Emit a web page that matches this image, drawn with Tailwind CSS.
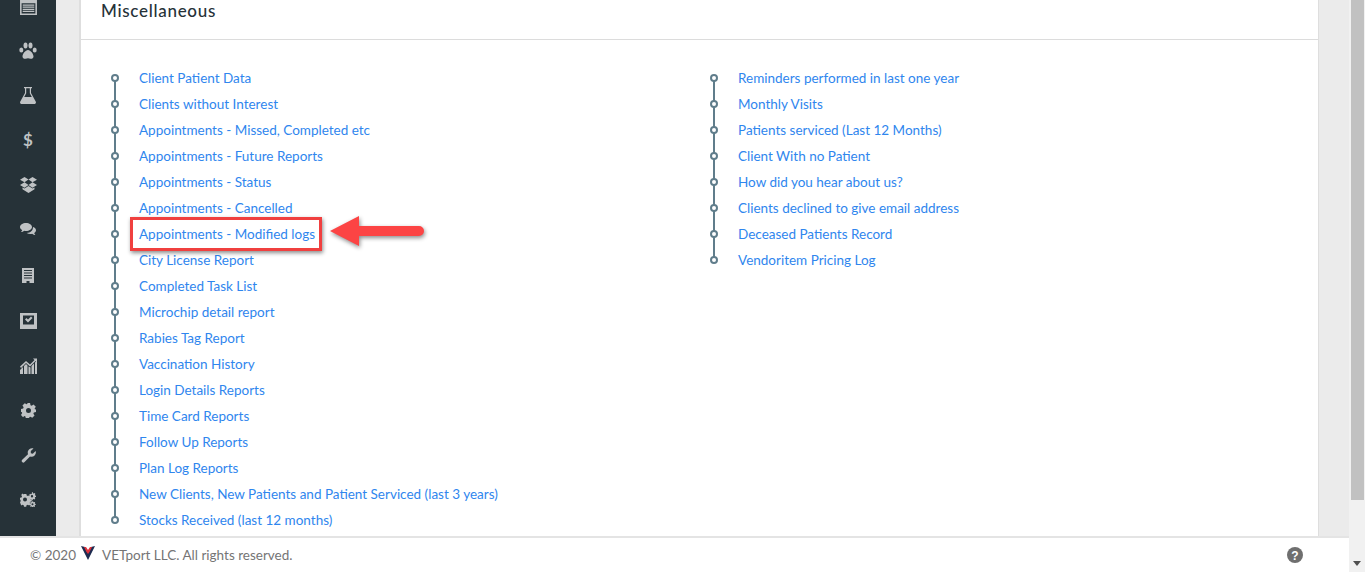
<!DOCTYPE html>
<html lang="en">
<head>
    <meta charset="UTF-8">
    <title>Reports - Miscellaneous</title>
    <script src="https://cdn.jsdelivr.net/npm/@tailwindcss/browser@4"></script>
</head>
<body class="h-[572px] overflow-hidden bg-white font-['Lato',sans-serif] flex">
    <div class="flex-1 min-w-0 flex flex-col">
        <div class="h-[536px] flex overflow-hidden bg-[#ebebeb]">
            <!-- sidebar -->
            <aside class="w-[56px] h-[560px] shrink-0 bg-[#263238] flex flex-col items-center text-[#bfc2c4] -mt-[17px]">
                <div class="h-[45px] flex items-center justify-center shrink-0">
                    <svg class="w-[17px] h-[18px]" viewBox="0 0 16 17" fill="currentColor"><path fill-rule="evenodd" d="M0 2h3V0h2v2h6V0h2v2h3v15H0zM1.500 6v9.500h13V6z"/><path d="M2.500 7h11v1.200h-11zM2.500 9h11v1.200h-11zM2.500 11h11v1.200h-11zM2.500 13h11v1.200h-11z"/></svg>
                </div>
                <div class="h-[45px] flex items-center justify-center shrink-0">
                    <svg class="w-[18px] h-[17px]" viewBox="0 0 18 17" fill="currentColor"><ellipse cx="6.500" cy="3.500" rx="2" ry="3"/><ellipse cx="11.500" cy="3.500" rx="2" ry="3"/><ellipse cx="2.300" cy="8" rx="2" ry="2.600"/><ellipse cx="15.700" cy="8" rx="2" ry="2.600"/><path d="M9 8c2.500 0 5.500 4 5.500 6.500 0 2-2 2.500-3 2.200-1-.3-1.700-.5-2.500-.5s-1.500.2-2.500.5c-1 .3-3-.2-3-2.200C3.500 12 6.500 8 9 8z"/></svg>
                </div>
                <div class="h-[44px] flex items-center justify-center shrink-0">
                    <svg class="w-[16px] h-[17px]" viewBox="0 0 16 17" fill="currentColor"><path fill-rule="evenodd" d="M4 0h8v1.200h-1V6l4.700 8.500c.7 1.200-.1 2.500-1.400 2.500H1.700C.4 17-.4 15.700.3 14.500L5 6V1.200H4zM6.200 1.200v5.100L4.200 10h7.600L9.800 6.300V1.200z"/></svg>
                </div>
                <div class="h-[45px] flex items-center justify-center shrink-0 text-[17px] font-bold">$</div>
                <div class="h-[45px] flex items-center justify-center shrink-0">
                    <svg class="w-[17px] h-[16px]" viewBox="0 0 17 16" fill="currentColor"><path d="M4.500 0l4 2.600L4.500 5.300 0 2.700zM12.500 0L17 2.700l-4.500 2.600-4-2.700zM0 8l4.500-2.700 4 2.700-4 2.700zM12.500 5.300L17 8l-4.500 2.700-4-2.700zM4.500 11.500l4-2.500 4 2.500 2-1.100v1.900L8.500 16l-6-3.700v-1.900z"/></svg>
                </div>
                <div class="h-[45px] flex items-center justify-center shrink-0">
                    <svg class="w-[16px] h-[13px]" viewBox="0 0 16 13" fill="currentColor"><path d="M6 0c3.300 0 6 1.700 6 4s-2.700 4-6 4c-.6 0-1.200-.1-1.700-.2C3.300 8.700 2 9 1 9c.7-.6 1.100-1.300 1.200-2C.9 6.300 0 5.200 0 4c0-2.300 2.700-4 6-4z"/><path d="M13 4c1.800.5 3 1.800 3 3.200 0 1.100-.7 2.100-1.800 2.800.1.700.5 1.400 1.200 2-1 0-2.300-.3-3.300-1.200-.5.100-1 .2-1.600.2-1.500 0-2.800-.4-3.800-1.100C10.500 9.800 13 7.500 13 4z"/></svg>
                </div>
                <div class="h-[45px] mt-[1px] flex items-center justify-center shrink-0">
                    <svg class="w-[12px] h-[15px]" viewBox="0 0 12 15" fill="currentColor"><path fill-rule="evenodd" d="M0 0h12v15H7.500v-2h-3v2H0zM2 2v1h8V2zM2 4.500v1h8v-1zM2 7v1h8V7zM2 9.500v1h8v-1z"/></svg>
                </div>
                <div class="h-[45px] flex items-center justify-center shrink-0">
                    <svg class="w-[17px] h-[16px]" viewBox="0 0 17 16" fill="currentColor"><path fill-rule="evenodd" d="M0 0h17v16H0zM3 2.500v9h11v-9z"/><path d="M5 6.500l1.500-1.500 1.500 1.500 3-3L12.500 5 8 9.500z"/></svg>
                </div>
                <div class="h-[45px] flex items-center justify-center shrink-0">
                    <svg class="w-[17px] h-[16px]" viewBox="0 0 17 16" fill="currentColor"><path d="M0 16v-4l3-3v7zM4 16V8l2-2 1.500 1.500V16zM8.500 16V8.500l2 1V16zM11.500 16V8l2.500-2.500V16zM15 16V4.500l2-2V16z"/><path d="M0 8.500L6 3l4 3.500L14.500 2 13 .5h4v4L15.500 3 10 8.500 6 5 1 10z"/></svg>
                </div>
                <div class="h-[45px] flex items-center justify-center shrink-0">
                    <svg class="w-[15px] h-[15px]" viewBox="0 0 24 24" fill="currentColor"><path fill-rule="evenodd" d="M9.500 0h5l.7 3.400 1.900.8L20 2.300 23.700 6l-1.900 2.900.8 1.900L24 9.500v5l-3.400.7-.8 1.900 1.900 2.900-3.700 3.700-2.900-1.900-1.600.7-.7 2.500h-5l-.7-3.400-1.900-.8L3.300 22.700 0 19l1.900-2.900-.8-1.900L0 14.500v-5l3.400-.7.8-1.900L2.300 3.900 6 .2l2.900 1.900 1.900-.8zM12 8a4 4 0 100 8 4 4 0 000-8z"/></svg>
                </div>
                <div class="h-[44px] flex items-center justify-center shrink-0">
                    <svg class="w-[15px] h-[15px]" viewBox="0 0 15 15" fill="currentColor"><path d="M1.200 11.700L7 6.200C6.300 4 7 2.300 8.300 1.200 9.500.2 11 0 12.500.4L9.800 3v2.200l2 .5L14.600 3c.6 1.700.2 3.300-1 4.500-1.200 1.100-2.900 1.500-4.600 1L3.300 14.300c-.5.500-1.300.5-1.900 0l-.4-.5c-.5-.6-.4-1.500.2-2.100z"/></svg>
                </div>
                <div class="h-[45px] flex items-center justify-center shrink-0">
                    <svg class="w-[16px] h-[15px]" viewBox="0 0 16 15" fill="currentColor"><path fill-rule="evenodd" d="M4 3.500h2.400l.3 1.500 1.300.6 1.300-.8 1.300 1.400-.8 1.300.4 1.300 1.500.3v1.800l-1.500.3-.5 1.300.8 1.300-1.400 1.200-1.300-.8-1.300.5-.3 1.500H4l-.3-1.500-1.300-.5-1.200.8L0 11.800l.8-1.300L.3 9.200 0 9V7.300l1.500-.3.500-1.300L1.200 4.400l1.300-1.300 1.200.8zM5 7a2 2 0 100 4 2 2 0 000-4z" transform="translate(0 -1.500)"/><path fill-rule="evenodd" d="M12 0l.8.2.2 1 .8.3.9-.4.7.9-.5.8.3.8 1 .3v1l-1 .2-.4.8.5.9-.8.7-.8-.5-.8.3-.3 1h-1l-.2-1-.8-.3-.9.5-.4-.5V6.800l.3-.3-.2-.7-.6-.3-.2-1.200.8-.2.4-.8-.5-.9.8-.7.8.5.8-.3zM12 3a1.200 1.200 0 100 2.400A1.200 1.200 0 0012 3z"/><path fill-rule="evenodd" d="M12.500 9l.6.2.2.8.6.2.7-.3.6.7-.4.6.2.6.8.2v.8l-.8.2-.3.6.4.7-.6.6-.7-.4-.6.2-.2.8h-.8l-.2-.8-.6-.2-.7.4-.5-.6.3-.7-.2-.6-.8-.2v-.8l.8-.2.3-.6-.4-.7.6-.5.7.3.6-.2zM12.500 11.300a1 1 0 100 2 1 1 0 000-2z"/></svg>
                </div>
            </aside>

            <!-- content -->
            <main class="flex-1 min-w-0 pl-[23px] pr-[30px]">
                <div class="relative h-[560px] bg-white border-l-2 border-r border-[#dedede]">
                    <div class="h-[40px] border-b border-[#dcdcdc] pl-[20px] text-[17px] leading-[22px] font-medium tracking-[0.7px] text-[#263238]">Miscellaneous</div>
                    <div class="flex pt-[25px] text-[13.5px] leading-[26px] text-[#2f86ee]">
                        <ul class="w-[599px] ml-[30px] relative before:absolute before:left-[3px] before:top-[11px] before:h-[442px] before:w-[2px] before:bg-[#607d8b]">
                            <li class="h-[26px] flex"><span class="relative mt-[9px] w-[8px] h-[8px] rounded-full border-2 border-[#607d8b] bg-white shrink-0"></span><a class="ml-[20px]">Client Patient Data</a></li>
                            <li class="h-[26px] flex"><span class="relative mt-[9px] w-[8px] h-[8px] rounded-full border-2 border-[#607d8b] bg-white shrink-0"></span><a class="ml-[20px]">Clients without Interest</a></li>
                            <li class="h-[26px] flex"><span class="relative mt-[9px] w-[8px] h-[8px] rounded-full border-2 border-[#607d8b] bg-white shrink-0"></span><a class="ml-[20px]">Appointments - Missed, Completed etc</a></li>
                            <li class="h-[26px] flex"><span class="relative mt-[9px] w-[8px] h-[8px] rounded-full border-2 border-[#607d8b] bg-white shrink-0"></span><a class="ml-[20px]">Appointments - Future Reports</a></li>
                            <li class="h-[26px] flex"><span class="relative mt-[9px] w-[8px] h-[8px] rounded-full border-2 border-[#607d8b] bg-white shrink-0"></span><a class="ml-[20px]">Appointments - Status</a></li>
                            <li class="h-[26px] flex"><span class="relative mt-[9px] w-[8px] h-[8px] rounded-full border-2 border-[#607d8b] bg-white shrink-0"></span><a class="ml-[20px]">Appointments - Cancelled</a></li>
                            <li class="h-[26px] flex"><span class="relative mt-[9px] w-[8px] h-[8px] rounded-full border-2 border-[#607d8b] bg-white shrink-0"></span><a class="ml-[20px]">Appointments - Modified logs</a></li>
                            <li class="h-[26px] flex"><span class="relative mt-[9px] w-[8px] h-[8px] rounded-full border-2 border-[#607d8b] bg-white shrink-0"></span><a class="ml-[20px]">City License Report</a></li>
                            <li class="h-[26px] flex"><span class="relative mt-[9px] w-[8px] h-[8px] rounded-full border-2 border-[#607d8b] bg-white shrink-0"></span><a class="ml-[20px]">Completed Task List</a></li>
                            <li class="h-[26px] flex"><span class="relative mt-[9px] w-[8px] h-[8px] rounded-full border-2 border-[#607d8b] bg-white shrink-0"></span><a class="ml-[20px]">Microchip detail report</a></li>
                            <li class="h-[26px] flex"><span class="relative mt-[9px] w-[8px] h-[8px] rounded-full border-2 border-[#607d8b] bg-white shrink-0"></span><a class="ml-[20px]">Rabies Tag Report</a></li>
                            <li class="h-[26px] flex"><span class="relative mt-[9px] w-[8px] h-[8px] rounded-full border-2 border-[#607d8b] bg-white shrink-0"></span><a class="ml-[20px]">Vaccination History</a></li>
                            <li class="h-[26px] flex"><span class="relative mt-[9px] w-[8px] h-[8px] rounded-full border-2 border-[#607d8b] bg-white shrink-0"></span><a class="ml-[20px]">Login Details Reports</a></li>
                            <li class="h-[26px] flex"><span class="relative mt-[9px] w-[8px] h-[8px] rounded-full border-2 border-[#607d8b] bg-white shrink-0"></span><a class="ml-[20px]">Time Card Reports</a></li>
                            <li class="h-[26px] flex"><span class="relative mt-[9px] w-[8px] h-[8px] rounded-full border-2 border-[#607d8b] bg-white shrink-0"></span><a class="ml-[20px]">Follow Up Reports</a></li>
                            <li class="h-[26px] flex"><span class="relative mt-[9px] w-[8px] h-[8px] rounded-full border-2 border-[#607d8b] bg-white shrink-0"></span><a class="ml-[20px]">Plan Log Reports</a></li>
                            <li class="h-[26px] flex"><span class="relative mt-[9px] w-[8px] h-[8px] rounded-full border-2 border-[#607d8b] bg-white shrink-0"></span><a class="ml-[20px]">New Clients, New Patients and Patient Serviced (last 3 years)</a></li>
                            <li class="h-[26px] flex"><span class="relative mt-[9px] w-[8px] h-[8px] rounded-full border-2 border-[#607d8b] bg-white shrink-0"></span><a class="ml-[20px]">Stocks Received (last 12 months)</a></li>
                        </ul>
                        <ul class="relative before:absolute before:left-[3px] before:top-[11px] before:h-[182px] before:w-[2px] before:bg-[#607d8b]">
                            <li class="h-[26px] flex"><span class="relative mt-[9px] w-[8px] h-[8px] rounded-full border-2 border-[#607d8b] bg-white shrink-0"></span><a class="ml-[20px]">Reminders performed in last one year</a></li>
                            <li class="h-[26px] flex"><span class="relative mt-[9px] w-[8px] h-[8px] rounded-full border-2 border-[#607d8b] bg-white shrink-0"></span><a class="ml-[20px]">Monthly Visits</a></li>
                            <li class="h-[26px] flex"><span class="relative mt-[9px] w-[8px] h-[8px] rounded-full border-2 border-[#607d8b] bg-white shrink-0"></span><a class="ml-[20px]">Patients serviced (Last 12 Months)</a></li>
                            <li class="h-[26px] flex"><span class="relative mt-[9px] w-[8px] h-[8px] rounded-full border-2 border-[#607d8b] bg-white shrink-0"></span><a class="ml-[20px]">Client With no Patient</a></li>
                            <li class="h-[26px] flex"><span class="relative mt-[9px] w-[8px] h-[8px] rounded-full border-2 border-[#607d8b] bg-white shrink-0"></span><a class="ml-[20px]">How did you hear about us?</a></li>
                            <li class="h-[26px] flex"><span class="relative mt-[9px] w-[8px] h-[8px] rounded-full border-2 border-[#607d8b] bg-white shrink-0"></span><a class="ml-[20px]">Clients declined to give email address</a></li>
                            <li class="h-[26px] flex"><span class="relative mt-[9px] w-[8px] h-[8px] rounded-full border-2 border-[#607d8b] bg-white shrink-0"></span><a class="ml-[20px]">Deceased Patients Record</a></li>
                            <li class="h-[26px] flex"><span class="relative mt-[9px] w-[8px] h-[8px] rounded-full border-2 border-[#607d8b] bg-white shrink-0"></span><a class="ml-[20px]">Vendoritem Pricing Log</a></li>
                        </ul>
                    </div>

                    <!-- annotation laid over the list -->
                    <div class="absolute left-[49px] top-[217px] w-[192px] h-[34px] border-[3px] border-[#f0403f] shadow-[1px_2px_4px_rgba(0,0,0,0.45)]"></div>
                    <svg class="absolute left-[246px] top-[211px] overflow-visible" width="100" height="40" viewBox="0 0 100 40" style="filter: drop-shadow(1px 2px 2px rgba(0,0,0,.45))">
                        <path d="M3 20L32 5v10h60a5 5 0 010 10H32v10z" fill="#fc4444"/>
                    </svg>
                </div>
            </main>
        </div>

        <!-- footer -->
        <footer class="h-[36px] border-t-2 border-[#e4e4e4] bg-white flex items-center pl-[30px] pr-[46px] text-[13.5px] text-[#757575]">
            <span>© 2020</span>
            <svg class="ml-[5px] mr-[7px] -mt-[5px]" width="14" height="14" viewBox="0 0 14 14"><path d="M0 0l4 1 3 5 3-5 4-1-7 14z" fill="#1d2b50"/><path d="M3 1l2 0 2 3 2-3 2 0-2.500 5-1.500 2-1.500-2z" fill="#e0323c"/></svg>
            <span>VETport LLC. All rights reserved.</span>
            <svg class="ml-auto" width="16" height="16" viewBox="0 0 16 16"><circle cx="8" cy="8" r="8" fill="#6f6f6f"/><text x="8" y="12.500" text-anchor="middle" font-size="12" font-weight="700" fill="#fff" font-family="Liberation Sans">?</text></svg>
        </footer>
    </div>

    <!-- browser scrollbar -->
    <div class="relative w-[16px] h-full shrink-0 bg-[#f1f1f1]">
        <div class="absolute left-[2px] top-0 w-[13px] h-[500px] bg-[#c1c1c1]"></div>
        <div class="absolute left-[4px] bottom-[6px] w-0 h-0 border-x-[4px] border-x-transparent border-t-[5px] border-t-[#505050]"></div>
    </div>
</body>
</html>
